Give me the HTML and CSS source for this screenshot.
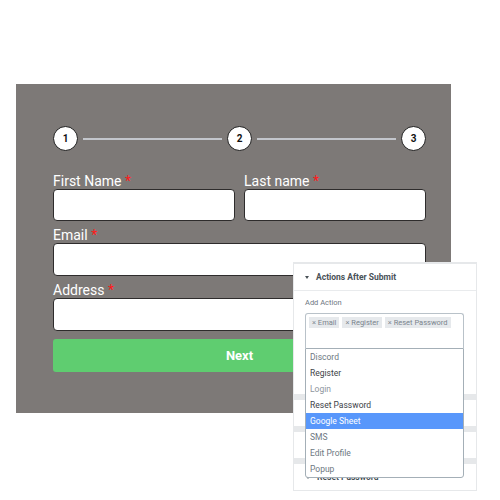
FILE: index.html
```html
<!DOCTYPE html>
<html>
<head>
<meta charset="utf-8">
<link rel="stylesheet" href="styles.css">
</head>
<body>
<div class="stage">
  <div class="form-card">
    <div class="steps">
      <div class="step">1</div>
      <div class="step-line"></div>
      <div class="step">2</div>
      <div class="step-line"></div>
      <div class="step">3</div>
    </div>
    <div class="row row-first">
      <div class="field">
        <div class="label">First Name <span class="req">*</span></div>
        <div class="input"></div>
      </div>
      <div class="field">
        <div class="label">Last name <span class="req">*</span></div>
        <div class="input"></div>
      </div>
    </div>
    <div class="field field-email">
      <div class="label">Email <span class="req">*</span></div>
      <div class="input input-email"></div>
    </div>
    <div class="field field-address">
      <div class="label">Address <span class="req">*</span></div>
      <div class="input"></div>
    </div>
    <div class="btn-next">Next</div>
  </div>

  <div class="panel">
    <div class="panel-head"><span class="caret"></span>Actions After Submit</div>
    <div class="panel-body">
      <div class="small-label">Add Action</div>
      <div class="select">
        <span class="tag">× Email</span>
        <span class="tag">× Register</span>
        <span class="tag">× Reset Password</span>
      </div>
    </div>
    <div class="sep"></div>
    <div class="section"></div>
    <div class="sep"></div>
    <div class="section"></div>
    <div class="sep"></div>
    <div class="section section-head"><span class="caret"></span>Reset Password</div>

    <ul class="dropdown">
      <li class="opt">Discord</li>
      <li class="opt dark">Register</li>
      <li class="opt light">Login</li>
      <li class="opt dark">Reset Password</li>
      <li class="opt active">Google Sheet</li>
      <li class="opt">SMS</li>
      <li class="opt">Edit Profile</li>
      <li class="opt">Popup</li>
    </ul>
  </div>
</div>
</body>
</html>
```

FILE: styles.css
```css
html, body {
  margin: 0;
  padding: 0;
  background: #ffffff;
  font-family: Roboto, "Liberation Sans", Arial, sans-serif;
}

.stage {
  position: relative;
  width: 500px;
  height: 500px;
}

.form-card {
  position: absolute;
  left: 16px;
  top: 84px;
  width: 435px;
  height: 329px;
  box-sizing: border-box;
  background: #7d7977;
  padding: 42px 25px 0 37px;
}

.steps {
  display: flex;
  align-items: center;
  height: 25px;
}

.step {
  width: 25px;
  height: 25px;
  box-sizing: border-box;
  border: 1.5px solid #1e1e1e;
  border-radius: 50%;
  background: #fff;
  color: #111;
  font-size: 10px;
  font-weight: 700;
  display: flex;
  align-items: center;
  justify-content: center;
  flex: none;
}

.step-line {
  flex: 1;
  height: 2px;
  background: #c3c6cc;
  margin: 0 5px;
}

.row {
  display: flex;
  gap: 9px;
}

.row-first {
  margin-top: 22px;
}

.row .field {
  flex: 1;
}

.label {
  color: #ffffff;
  font-size: 14px;
  line-height: 16px;
  height: 16px;
}

.req {
  color: #ff1a1a;
}

.input {
  height: 32px;
  box-sizing: border-box;
  background: #ffffff;
  border: 1.5px solid #2e2c2c;
  border-radius: 4px;
}

.field-email {
  margin-top: 6px;
}

.input-email {
  height: 33px;
}

.field-address {
  margin-top: 6px;
}

.field-address .input {
  height: 33px;
}

.btn-next {
  margin-top: 8px;
  height: 33px;
  border-radius: 3px;
  background: #5fcd70;
  color: #ffffff;
  font-size: 13px;
  font-weight: 700;
  display: flex;
  align-items: center;
  justify-content: center;
}

.panel {
  position: absolute;
  left: 293px;
  top: 262px;
  width: 184px;
  height: 229px;
  box-sizing: border-box;
  background: #ffffff;
  border: 1px solid #e6e8ea;
  border-top: 2px solid #e6e8ea;
  display: flex;
  flex-direction: column;
}

.panel-head {
  height: 26px;
  flex: none;
  border-bottom: 1px solid #e9ebed;
  display: flex;
  align-items: center;
  padding-left: 11px;
  font-size: 8.5px;
  font-weight: 700;
  color: #495157;
}

.caret {
  width: 0;
  height: 0;
  border-left: 2.5px solid transparent;
  border-right: 2.5px solid transparent;
  border-top: 3px solid #495157;
  margin-right: 7px;
}

.panel-body {
  height: 103px;
  flex: none;
  padding: 0 12px 0 11px;
  box-sizing: border-box;
}

.small-label {
  margin-top: 7px;
  height: 10px;
  line-height: 10px;
  font-size: 7.5px;
  color: #6d7882;
}

.select {
  margin-top: 5px;
  height: 35px;
  box-sizing: border-box;
  border: 1px solid #b9c2c9;
  border-bottom: none;
  border-radius: 3px 3px 0 0;
  padding: 3px 3px 0 3px;
  display: flex;
  align-items: flex-start;
  gap: 3px;
}

.tag {
  height: 11px;
  line-height: 11px;
  padding: 0 3px;
  background: #e6e9ec;
  color: #7a848d;
  font-size: 7.5px;
  white-space: nowrap;
}

.sep {
  height: 6px;
  flex: none;
  background: #e6e8ea;
}

.section {
  height: 26px;
  flex: none;
}

.section-head {
  display: flex;
  align-items: center;
  padding-left: 12px;
  font-size: 8.5px;
  font-weight: 700;
  color: #495157;
}

.dropdown {
  position: absolute;
  left: 11px;
  top: 84px;
  width: 159px;
  margin: 0;
  padding: 0;
  list-style: none;
  background: #ffffff;
  border: 1px solid #a4afb7;
  border-radius: 0 0 3px 3px;
  box-sizing: border-box;
}

.opt {
  height: 16px;
  line-height: 16px;
  padding-left: 4px;
  font-size: 8.5px;
  color: #6d7882;
}

.opt.dark {
  color: #3d4247;
}

.opt.light {
  color: #8d969e;
}

.opt.active {
  background: #5897fb;
  color: #ffffff;
}
```
